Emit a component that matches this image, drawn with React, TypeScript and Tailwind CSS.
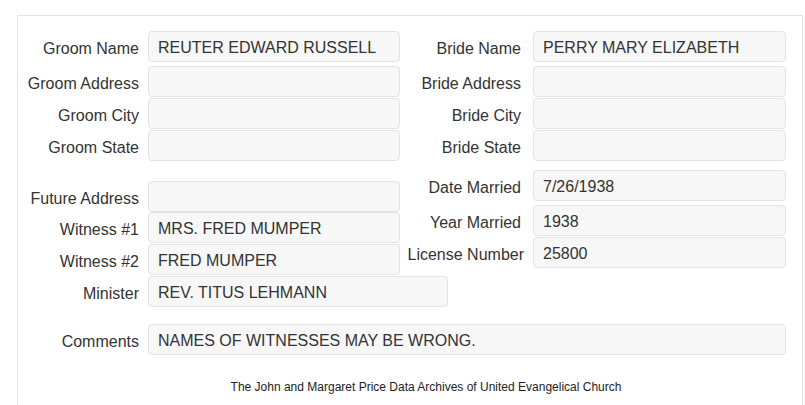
const labelCls =
  "w-[121px] shrink-0 text-right whitespace-nowrap text-[16px] text-[#333]";
const boxCls =
  "h-[31px] shrink-0 rounded-[4px] border border-[#e3e3e3] bg-[#f7f7f7] px-[9px] text-[16px] leading-[31px] text-[#333] whitespace-nowrap";

function Field({
  label,
  value,
  gap = 9,
  width = 252,
  className = "",
  labelExtra = "",
}: {
  label: string;
  value?: string;
  gap?: number;
  width?: number;
  className?: string;
  labelExtra?: string;
}) {
  return (
    <div className={`flex items-center ${className}`}>
      <div className={`${labelCls} pt-[4px] ${labelExtra}`}>{label}</div>
      <div className={gap === 9 ? "w-[9px] shrink-0" : "w-[12px] shrink-0"} />
      <div
        className={`${boxCls} ${
          width === 300 ? "w-[300px]" : width === 253 ? "w-[253px]" : width === 638 ? "w-[638px]" : "w-[252px]"
        }`}
      >
        {value}
      </div>
    </div>
  );
}

export default function App() {
  return (
    <div
      className="min-h-[405px] bg-white pt-[15px] pl-[17px] pr-[2px]"
      style={{ fontFamily: '"Liberation Sans", Arial, sans-serif' }}
    >
      <div className="h-[390px] border-l border-t border-r border-[#e3e3e3] pt-[15px]">
        <div className="flex">
          {/* Groom / left column */}
          <div className="w-[382px] shrink-0">
            <Field label="Groom Name" value="REUTER EDWARD RUSSELL" />
            <Field label="Groom Address" className="mt-[4px]" />
            <Field label="Groom City" className="mt-[1px]" />
            <Field label="Groom State" className="mt-[1px]" />

            <Field label="Future Address" className="mt-[20px]" />
            <Field label="Witness #1" value="MRS. FRED MUMPER" />
            <Field label="Witness #2" value="FRED MUMPER" className="mt-[1px]" />
            <Field
              label="Minister"
              value="REV. TITUS LEHMANN"
              width={300}
              className="mt-[1px]"
            />
          </div>

          {/* Bride / right column */}
          <div className="shrink-0">
            <Field label="Bride Name" value="PERRY MARY ELIZABETH" gap={12} width={253} />
            <Field label="Bride Address" gap={12} width={253} className="mt-[4px]" />
            <Field label="Bride City" gap={12} width={253} className="mt-[1px]" />
            <Field label="Bride State" gap={12} width={253} className="mt-[1px]" />

            <Field label="Date Married" value="7/26/1938" gap={12} width={253} className="mt-[9px]" />
            <Field label="Year Married" value="1938" gap={12} width={253} className="mt-[4px]" />
            <Field
              label="License Number"
              value="25800"
              gap={9}
              width={253}
              className="mt-[1px]"
              labelExtra="ml-[3px]"
            />
          </div>
        </div>

        <Field
          label="Comments"
          value="NAMES OF WITNESSES MAY BE WRONG."
          width={638}
          className="mt-[17px]"
        />

        <p className="mt-[23px] pl-[32px] text-center text-[12px] text-[#222]">
          The John and Margaret Price Data Archives of United Evangelical Church
        </p>
      </div>
    </div>
  );
}
